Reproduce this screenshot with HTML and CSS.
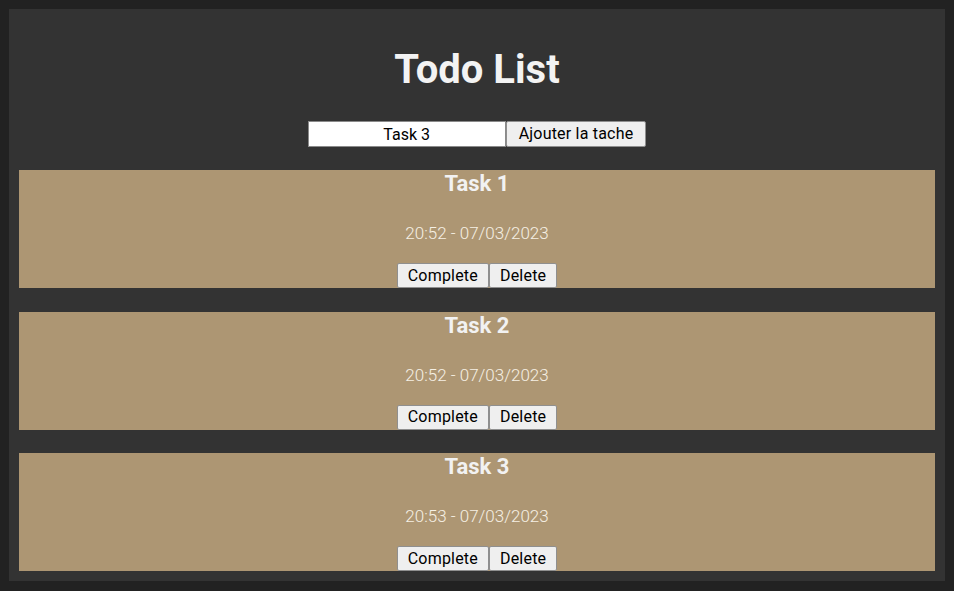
FILE: index.html
```html
<!DOCTYPE html>
<html lang="fr">
<head>
<meta charset="utf-8">
<title>Todo List</title>
<link rel="stylesheet" href="styles.css">
</head>
<body>
<div class="app">
  <h1 class="title">Todo List</h1>
  <form class="add-form">
    <input class="add-input" type="text" value="Task 3">
    <button class="btn" type="button">Ajouter la tache</button>
  </form>
  <div class="list">
    <div class="card">
      <h2 class="card-title">Task 1</h2>
      <p class="card-date">20:52 - 07/03/2023</p>
      <div class="card-actions"><button class="btn" type="button">Complete</button><button class="btn" type="button">Delete</button></div>
    </div>
    <div class="card">
      <h2 class="card-title">Task 2</h2>
      <p class="card-date">20:52 - 07/03/2023</p>
      <div class="card-actions"><button class="btn" type="button">Complete</button><button class="btn" type="button">Delete</button></div>
    </div>
    <div class="card">
      <h2 class="card-title">Task 3</h2>
      <p class="card-date">20:53 - 07/03/2023</p>
      <div class="card-actions"><button class="btn" type="button">Complete</button><button class="btn" type="button">Delete</button></div>
    </div>
  </div>
</div>
</body>
</html>
```
FILE: styles.css
```css
html, body {
  background: #222222;
}
body {
  margin: 9px;
  font-family: Roboto, "Open Sans", sans-serif;
}
.app {
  background: #333333;
  padding: 10px;
  display: flex;
  flex-direction: column;
}
.title {
  margin: 27px 0 0;
  font-size: 40px;
  line-height: 48px;
  font-weight: 700;
  color: #f3f3f3;
  text-align: center;
}
.add-form {
  margin: 27px 0 0;
  display: flex;
  justify-content: center;
}
.add-input {
  box-sizing: border-box;
  width: 198px;
  height: 26px;
  margin: 0;
  border: 1px solid #8a8a8a;
  background: #ffffff;
  font-family: inherit;
  font-size: 16px;
  color: #000;
  text-align: center;
  padding: 0 4px;
}
.btn {
  box-sizing: border-box;
  height: 26px;
  margin: 0;
  padding: 0 12px;
  border: 1px solid #8f8f8f;
  border-radius: 2px;
  background: #efefef;
  font-family: inherit;
  font-size: 16px;
  color: #000;
  line-height: 22px;
  letter-spacing: 0.2px;
}
.list {
  margin-top: 23px;
  display: flex;
  flex-direction: column;
  gap: 23.5px;
}
.card {
  background: #ad9673;
  display: flex;
  flex-direction: column;
  align-items: center;
  height: 118px;
}
.card-title {
  margin: 0;
  font-size: 22px;
  line-height: 28px;
  font-weight: 700;
  color: #f2f2f2;
}
.card-date {
  margin: 24px 0 0;
  font-size: 17px;
  line-height: 22px;
  font-weight: 300;
  color: #f6f0e4;
}
.card-actions {
  margin-top: 19px;
  display: flex;
}
.card-actions .btn {
  height: 25px;
  padding: 0 10px;
}
```
